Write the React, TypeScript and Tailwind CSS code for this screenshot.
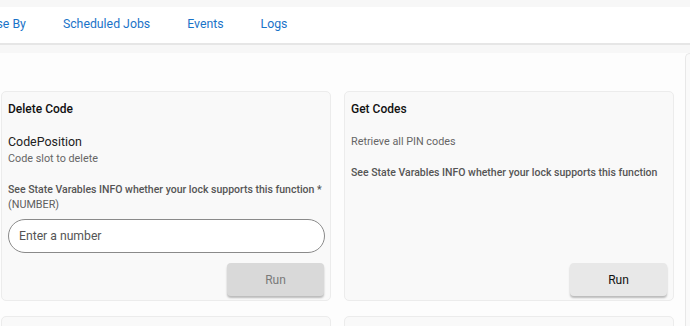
import React from 'react';

const tabs = ['Use By', 'Scheduled Jobs', 'Events', 'Logs'];

const Card: React.FC<{ title: string; children: React.ReactNode; disabled?: boolean }> = ({
  title,
  children,
  disabled = false,
}) => (
  <div className="flex h-[210px] flex-col rounded-[5px] border border-[#ececec] bg-[#f9f9f9] px-[6px] pt-[9px] pb-[4px]">
    <h3 className="text-[12px] font-medium leading-[16px] text-[#111]">{title}</h3>
    <div className="flex-1">{children}</div>
    <div className="flex justify-end">
      <button
        className={
          disabled
            ? 'h-[33px] w-[97px] rounded-[4px] bg-[#d9d9d9] text-[12px] text-[#7a7a7a] shadow-[0_2px_2px_rgba(0,0,0,0.25)]'
            : 'h-[33px] w-[97px] rounded-[4px] bg-[#e8e8e8] text-[12px] text-[#111] shadow-[0_2px_2px_rgba(0,0,0,0.25)]'
        }
      >
        Run
      </button>
    </div>
  </div>
);

export default function App() {
  return (
    <div className="h-[326px] overflow-hidden bg-[#f7f7f7] pt-[7px] font-['Roboto',sans-serif]">
      {/* tabs */}
      <div className="flex h-[38px] items-center overflow-hidden border-b-2 border-[#e6e6e6] bg-white pb-[1px]">
        <div className="-ml-[30px] flex">
          {tabs.map((t) => (
            <span key={t} className="px-[18.5px] text-[12.3px] text-[#1a73c8]">
              {t}
            </span>
          ))}
        </div>
      </div>

      <div className="mt-[8px] flex h-[300px] bg-[#fdfdfd]">
        <div className="flex-1 pt-[38px] pl-[1px]">
          <div className="grid w-[673px] grid-cols-2 gap-x-[13px] gap-y-[15px]">
            <Card title="Delete Code" disabled>
              <div className="mt-[17px] text-[12.4px] leading-[16px] text-[#222]">CodePosition</div>
              <div className="mt-[2px] text-[10.8px] leading-[14px] text-[#666]">Code slot to delete</div>
              <div className="mt-[16px] whitespace-nowrap text-[10.5px] font-medium leading-[15px] text-[#555]">
                See State Varables INFO whether your lock supports this function *
              </div>
              <div className="text-[10.8px] leading-[15px] text-[#5e5e5e]">(NUMBER)</div>
              <div className="mt-[7px] flex h-[34px] w-[317px] items-center rounded-full border border-[#8a8a8a] bg-white px-[10px]">
                <span className="text-[12.2px] text-[#555]">Enter a number</span>
              </div>
            </Card>
            <Card title="Get Codes">
              <div className="mt-[18px] text-[10.8px] leading-[14px] text-[#666]">Retrieve all PIN codes</div>
              <div className="mt-[16px] whitespace-nowrap text-[10.5px] font-medium leading-[15px] text-[#555]">
                See State Varables INFO whether your lock supports this function
              </div>
            </Card>
            <div className="h-[210px] rounded-[5px] border border-[#ececec] bg-[#f9f9f9]" />
            <div className="h-[210px] rounded-[5px] border border-[#ececec] bg-[#f9f9f9]" />
          </div>
        </div>
        <div className="w-[5px] rounded-tl-[5px] border-t border-l border-[#e8e8e8] bg-[#fafafa]" />
      </div>
    </div>
  );
}
